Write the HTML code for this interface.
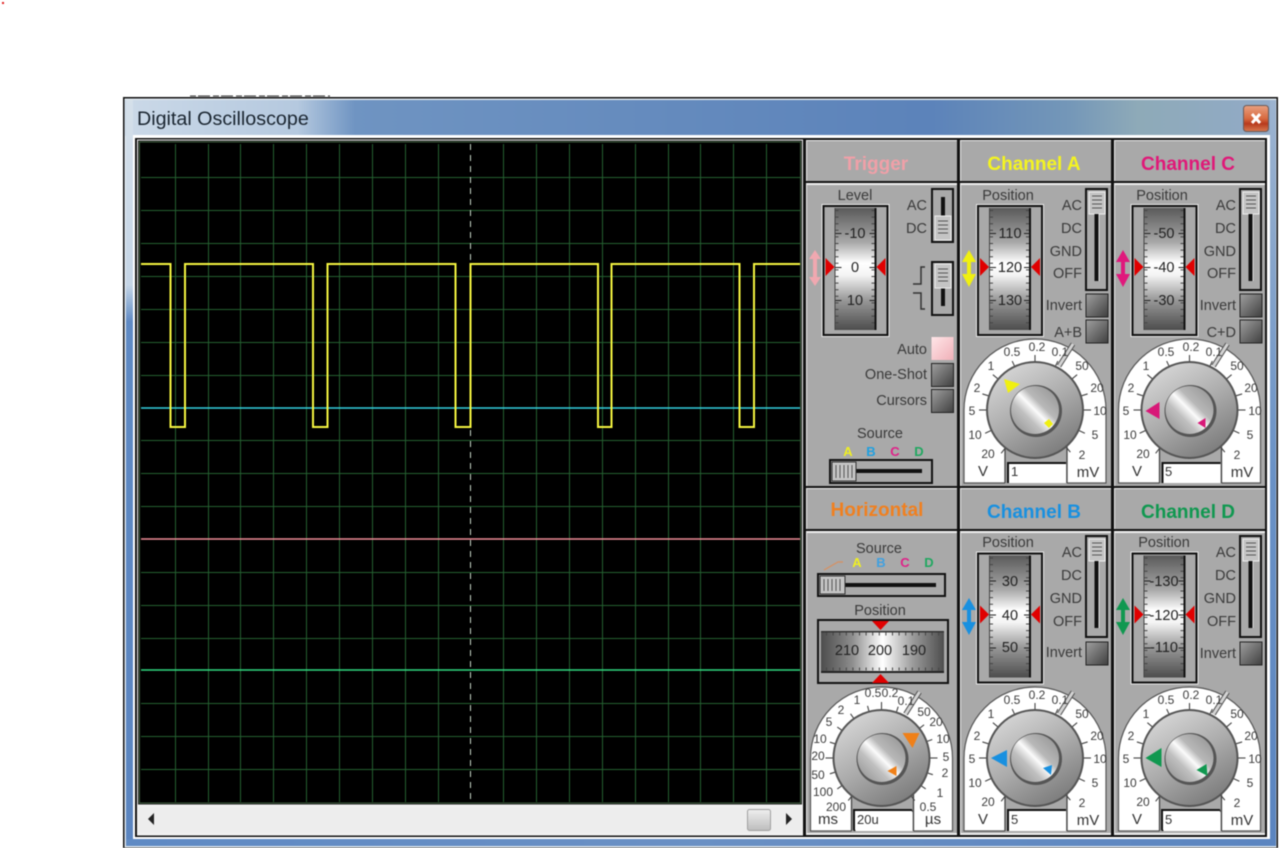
<!DOCTYPE html>
<html><head><meta charset="utf-8"><title>Digital Oscilloscope</title>
<style>
html,body{margin:0;padding:0;background:#fff;width:1280px;height:848px;overflow:hidden}
svg{display:block;position:absolute;left:0;top:0;filter:blur(.4px)}
text{font-family:"Liberation Sans",sans-serif;fill:#3a3a3a}
.h{font-size:19px;font-weight:bold;text-anchor:middle}
.r{font-size:14.5px;text-anchor:end}
.m{font-size:14.5px;text-anchor:middle}
.s{font-size:14.5px;text-anchor:middle;fill:#222}
.d{font-size:12px;text-anchor:middle;fill:#3c3c3c}
.u{font-size:15px;text-anchor:middle;fill:#333}
.v{font-size:13px;fill:#333}
.l{font-size:13px;font-weight:bold;text-anchor:middle}
</style></head><body>
<svg width="1280" height="848" viewBox="0 0 1280 848" xmlns="http://www.w3.org/2000/svg">
<defs>
<linearGradient id="tb" x1="0" x2="1" y1="0" y2="0">
<stop offset="0" stop-color="#cbd9e8"/><stop offset=".15" stop-color="#b5c9df"/><stop offset=".2" stop-color="#6f94c2"/><stop offset=".7" stop-color="#5c83ba"/><stop offset=".82" stop-color="#7497b8"/><stop offset=".88" stop-color="#8eaab8"/><stop offset="1" stop-color="#92aac8"/>
</linearGradient>
<linearGradient id="lf" x1="0" x2="0" y1="0" y2="1">
<stop offset="0" stop-color="#d5e0ea"/><stop offset=".25" stop-color="#c5d5e6"/><stop offset=".3" stop-color="#5f8ac4"/><stop offset="1" stop-color="#5b85c0"/>
</linearGradient>
<linearGradient id="rf" x1="0" x2="0" y1="0" y2="1">
<stop offset="0" stop-color="#9db4d0"/><stop offset=".5" stop-color="#6a92c6"/><stop offset="1" stop-color="#5b85c0"/>
</linearGradient>
<linearGradient id="bt" x1="0" x2="1" y1="0" y2="0">
<stop offset="0" stop-color="#5f8ac4"/><stop offset=".5" stop-color="#6a90c4"/><stop offset="1" stop-color="#5b85c0"/>
</linearGradient>
<linearGradient id="vs" x1="0" x2="0" y1="0" y2="1">
<stop offset="0" stop-color="#5a5a5a"/><stop offset=".28" stop-color="#a8a8a8"/><stop offset=".45" stop-color="#fff"/><stop offset=".55" stop-color="#f4f4f4"/><stop offset=".75" stop-color="#9a9a9a"/><stop offset="1" stop-color="#4d4d4d"/>
</linearGradient>
<linearGradient id="hs" x1="0" x2="1" y1="0" y2="0">
<stop offset="0" stop-color="#4d4d4d"/><stop offset=".25" stop-color="#8c8c8c"/><stop offset=".5" stop-color="#fff"/><stop offset=".75" stop-color="#9a9a9a"/><stop offset="1" stop-color="#4d4d4d"/>
</linearGradient>
<linearGradient id="bn" x1="0" x2="1" y1="0" y2="1">
<stop offset="0" stop-color="#a0a0a0"/><stop offset="1" stop-color="#3f3f3f"/>
</linearGradient>
<linearGradient id="au" x1="0" x2="1" y1="0" y2="1">
<stop offset="0" stop-color="#ffe6e8"/><stop offset="1" stop-color="#f0b0b8"/>
</linearGradient>
<linearGradient id="kb" x1=".2" x2=".8" y1="0" y2="1">
<stop offset="0" stop-color="#d8d8d8"/><stop offset=".5" stop-color="#ababab"/><stop offset="1" stop-color="#777"/>
</linearGradient>
<linearGradient id="cp" x1="0" x2="1" y1="1" y2="0">
<stop offset="0" stop-color="#8a8a8a"/><stop offset=".35" stop-color="#c0c0c0"/><stop offset=".5" stop-color="#fbfbfb"/><stop offset=".62" stop-color="#b8b8b8"/><stop offset="1" stop-color="#8e8e8e"/>
</linearGradient>
<linearGradient id="cl" x1="0" x2="0" y1="0" y2="1">
<stop offset="0" stop-color="#e8a080"/><stop offset=".5" stop-color="#d86a40"/><stop offset=".7" stop-color="#b83a1c"/><stop offset="1" stop-color="#d87a50"/>
</linearGradient>
<linearGradient id="sc" x1="0" x2="0" y1="0" y2="1">
<stop offset="0" stop-color="#efefef"/><stop offset="1" stop-color="#bdbdbd"/>
</linearGradient>

<g id="vbox">
<rect x="-33.500" y="-63.500" width="67" height="132" fill="none" stroke="#e8e8e8"/>
<rect x="-32" y="-62" width="64" height="129" fill="#a9a9a9" stroke="#111" stroke-width="2"/>
<rect x="-20" y="-60" width="40" height="122" fill="url(#vs)"/>
<rect x="19" y="-60" width="2" height="122" fill="#111"/>
<rect x="-21" y="-60" width="1" height="122" fill="#444"/>
<line x1="-18.500" x2="-18.500" y1="-58" y2="60" stroke="#444" stroke-width="3" stroke-dasharray="1 5.600"/>
<line x1="17.500" x2="17.500" y1="-58" y2="60" stroke="#444" stroke-width="3" stroke-dasharray="1 5.600"/>
<path d="M-20 -34.500h6M14 -34.500h6M-20 -.5h6M14 -.5h6M-20 32.500h6M14 32.500h6" stroke="#222" fill="none"/>
<path d="M-30 -10L-21 -1L-30 8ZM30 -10L21 -1L30 8Z" fill="#e00000"/>
</g>

<g id="vslide">
<rect x="-10" y="0" width="21" height="101" fill="#a9a9a9" stroke="#111" stroke-width="2"/>
<rect x="-7" y="3" width="16" height="22" fill="#c4c4c4" stroke="#eee"/>
<path d="M-4 7h10M-4 11h10M-4 15h10M-4 19h10" stroke="#555"/>
<rect x="-1.500" y="25" width="4" height="67" fill="#111"/>
<rect x="2.500" y="25" width="1" height="67" fill="#ddd"/>
</g>

<rect id="btn" width="22" height="23" fill="url(#bn)" stroke="#222"/>
<rect id="ab" width="22" height="23" fill="url(#au)"/>

<g id="dial">
<path d="M-71 73V0A71 71 0 0 1 71 0V73H-71Z" fill="#fff" stroke="#555" stroke-width="1.200"/>
<rect x="-30" y="35" width="62" height="39" fill="#a9a9a9"/>
<path d="M-30 35V73M32 35V73" stroke="#444" stroke-width="1.300"/>
<path d="M24 -44L38 -66" stroke="#555" stroke-width="5"/>
<path d="M24 -44L38 -66" stroke="#d4d4d4" stroke-width="3"/>
<rect x="-28" y="52" width="59" height="21" fill="#fff"/>
<path d="M-27 73V53H31" fill="none" stroke="#111" stroke-width="2"/>
</g>

<g id="ticks">
<g stroke="#444" stroke-width="1.100">
<line x1="46" x2="55" transform="rotate(-90)"/><line x1="46" x2="54" transform="rotate(-115)"/><line x1="46" x2="55" transform="rotate(-140)"/><line x1="46" x2="55" transform="rotate(-163)"/><line x1="46" x2="56" transform="rotate(180)"/><line x1="46" x2="55" transform="rotate(155)"/><line x1="46" x2="55" transform="rotate(128)"/><line x1="46" x2="54" transform="rotate(-65)"/><line x1="46" x2="55" transform="rotate(-40)"/><line x1="46" x2="55" transform="rotate(-17)"/><line x1="46" x2="56"/><line x1="46" x2="55" transform="rotate(25)"/><line x1="46" x2="55" transform="rotate(50)"/>
</g>
</g>

<g id="knob">
<circle r="49" fill="#555"/>
<circle r="47" fill="url(#kb)"/>
<circle r="26" cx="1" cy="1" fill="#555"/>
<circle r="24" fill="url(#cp)"/>
</g>
</defs>

<!-- page artifacts -->
<rect x="2" y="2" width="2" height="2" fill="#e02020"/>
<path d="M190 96h140" stroke="#333" stroke-width="1" stroke-dasharray="6 2 12 3"/>

<!-- window -->
<rect x="123" y="97" width="1155" height="751" fill="#111"/>
<rect x="124.500" y="98.500" width="1152" height="749" fill="#dfe7ee"/>
<rect x="125" y="100" width="1151" height="36" fill="url(#tb)"/>
<rect x="126" y="100" width="7" height="740" fill="url(#lf)"/>
<rect x="1270" y="100" width="6" height="740" fill="url(#rf)"/>
<rect x="126" y="839" width="1150" height="7" fill="url(#bt)"/>
<text x="137" y="125" style="font-size:19.700px;fill:#1a2530">Digital Oscilloscope</text>
<rect x="1243.500" y="105.500" width="25" height="26" rx="3" fill="url(#cl)" stroke="#6a5a58"/>
<path d="M1252 114L1260 123M1260 114L1252 123" stroke="#fff" stroke-width="3"/>

<!-- inner frame -->
<rect x="133" y="135" width="1137" height="704" fill="#fff"/>
<rect x="135" y="138" width="1132" height="699" fill="#111"/>
<rect x="137" y="139.500" width="666" height="696" fill="#f0f0f0"/>
<rect x="138" y="140.500" width="664" height="664" fill="#222"/>
<rect x="139.500" y="142" width="661" height="661" fill="#000" stroke="#3a5a3a"/>

<!-- grid -->
<path d="M175.500 144V802M208.500 144V802M240.500 144V802M273.500 144V802M306.500 144V802M339.500 144V802M372.500 144V802M405.500 144V802M438.500 144V802M503.500 144V802M536.500 144V802M569.500 144V802M602.500 144V802M635.500 144V802M668.500 144V802M700.500 144V802M733.500 144V802M766.500 144V802M141 177.500H800M141 210.500H800M141 243.500H800M141 276.500H800M141 309.500H800M141 342.500H800M141 375.500H800M141 440.500H800M141 473.500H800M141 506.500H800M141 572.500H800M141 605.500H800M141 638.500H800M141 703.500H800M141 736.500H800M141 769.500H800" stroke="#246030" stroke-width="1" fill="none"/>
<line x1="470.500" x2="470.500" y1="144" y2="802" stroke="#c8d8c8" stroke-dasharray="6 5"/>
<line x1="141" x2="800" y1="408" y2="408" stroke="#34d0e0" stroke-width="1.500"/>
<line x1="141" x2="800" y1="539" y2="539" stroke="#f08c98" stroke-width="1.500"/>
<line x1="141" x2="800" y1="670" y2="670" stroke="#30d880" stroke-width="1.500"/>
<path d="M141 264H170.500V427H185V264H313V427H327.500V264H455.500V427H470.500V264H598V427H611.500V264H739.500V427H754V264H800" fill="none" stroke="#f6f640" stroke-width="2"/>

<!-- scrollbar -->
<rect x="138" y="807" width="665" height="26" fill="#ededed"/>
<path d="M154 813L148 819L154 825Z" fill="#222"/>
<path d="M786 813L792 819L786 825Z" fill="#222"/>
<rect x="747.500" y="809.500" width="23" height="21" rx="2" fill="url(#sc)" stroke="#a0a0a0"/>

<!-- right panels -->
<rect x="804" y="139" width="463" height="698" fill="#111"/>
<g fill="#eee">
<rect x="806" y="140" width="151" height="349"/><rect x="960" y="140" width="151" height="349"/><rect x="1114" y="140" width="151" height="349"/>
<rect x="806" y="488" width="151" height="347"/><rect x="960" y="488" width="151" height="347"/><rect x="1114" y="488" width="151" height="347"/>
</g>
<g fill="#a9a9a9">
<rect x="807" y="141" width="150" height="40"/><rect x="961" y="141" width="150" height="40"/><rect x="1115" y="141" width="150" height="40"/>
<rect x="807" y="185" width="150" height="301"/><rect x="961" y="185" width="150" height="301"/><rect x="1115" y="185" width="150" height="301"/>
<rect x="807" y="489" width="150" height="40"/><rect x="961" y="489" width="150" height="40"/><rect x="1115" y="489" width="150" height="40"/>
<rect x="807" y="533" width="150" height="300"/><rect x="961" y="533" width="150" height="300"/><rect x="1115" y="533" width="150" height="300"/>
</g>
<g fill="#111">
<rect x="806" y="181" width="459" height="2"/>
<rect x="806" y="529" width="459" height="2"/>
<rect x="806" y="486" width="459" height="2"/>
</g>

<text class="h" x="876" y="170" style="fill:#f0a0a8">Trigger</text>
<text class="h" x="1034" y="170" style="fill:#f4f420">Channel A</text>
<text class="h" x="1188" y="170" style="fill:#e01878">Channel C</text>
<text class="h" x="877" y="516" style="fill:#f08020">Horizontal</text>
<text class="h" x="1034" y="518" style="fill:#1890e0">Channel B</text>
<text class="h" x="1188" y="518" style="fill:#109850">Channel D</text>

<!-- Trigger -->
<text class="m" x="855" y="200">Level</text>
<use href="#vbox" x="855.500" y="268"/>
<text class="s" x="855" y="238">-10</text><text class="s" x="855" y="272">0</text><text class="s" x="855" y="305">10</text>
<path d="M815 250L809 259H813V277H809L815 286L821 277H817V259H821Z" fill="#f0a8b0"/>
<text class="r" x="927" y="210">AC</text><text class="r" x="927" y="233">DC</text>
<rect x="932" y="189" width="21" height="53" fill="#a9a9a9" stroke="#111" stroke-width="2"/>
<rect x="941" y="197" width="4" height="20" fill="#111"/>
<rect x="935" y="216" width="16" height="24" fill="#c4c4c4" stroke="#eee"/>
<path d="M938 221h10M938 225h10M938 229h10M938 233h10" stroke="#555"/>
<rect x="932" y="262" width="21" height="53" fill="#a9a9a9" stroke="#111" stroke-width="2"/>
<rect x="941" y="288" width="4" height="18" fill="#111"/>
<rect x="935" y="264" width="16" height="24" fill="#c4c4c4" stroke="#eee"/>
<path d="M938 269h10M938 273h10M938 277h10M938 281h10" stroke="#555"/>
<path d="M925 267H921V284H913M913 293H921V309H925" fill="none" stroke="#333" stroke-width="1.500"/>
<use href="#ab" x="931.500" y="337"/><use href="#btn" x="931.500" y="363.500"/><use href="#btn" x="931.500" y="389.500"/>
<text class="r" x="927" y="354">Auto</text><text class="r" x="927" y="379">One-Shot</text><text class="r" x="927" y="405">Cursors</text>
<text class="m" x="880" y="438">Source</text>
<text class="l" x="848" y="456" style="fill:#f0f020">A</text><text class="l" x="871" y="456" style="fill:#20a0e0">B</text><text class="l" x="895" y="456" style="fill:#e02088">C</text><text class="l" x="919" y="456" style="fill:#20a860">D</text>
<rect x="830" y="460" width="102" height="23" fill="#a9a9a9" stroke="#111" stroke-width="2"/>
<rect x="856" y="469" width="66" height="4" fill="#111"/>
<rect x="832" y="462" width="24" height="19" fill="#c4c4c4" stroke="#333"/>
<path d="M836 465v13M840 465v13M844 465v13M848 465v13M852 465v13" stroke="#555"/>

<!-- Channel A -->
<text class="m" x="1008" y="200">Position</text>
<use href="#vbox" x="1010" y="268"/>
<text class="s" x="1010" y="238">110</text><text class="s" x="1010" y="272">120</text><text class="s" x="1010" y="305">130</text>
<path d="M969 250L962 262H967V274H962L969 287L976 274H971V262H976Z" fill="#f0f010"/>
<text class="r" x="1082" y="210">AC</text><text class="r" x="1082" y="233">DC</text><text class="r" x="1082" y="256">GND</text><text class="r" x="1082" y="278">OFF</text>
<use href="#vslide" x="1096" y="189"/>
<use href="#btn" x="1086" y="294"/><use href="#btn" x="1086" y="320"/>
<text class="r" x="1082" y="310">Invert</text><text class="r" x="1082" y="337">A+B</text>
<g transform="translate(1035,410)"><use href="#dial"/><use href="#ticks"/><use href="#knob"/>
<path d="M-31 -31L-15 -26L-27 -17Z" fill="#f0f010"/><path d="M9 13L14 9L18 14L14 18Z" fill="#f0f010"/></g>
<text class="d" x="1012" y="356">0.5</text><text class="d" x="1037" y="351">0.2</text><text class="d" x="1060" y="356">0.1</text><text class="d" x="1082" y="370">50</text><text class="d" x="1097" y="392">20</text><text class="d" x="1100" y="415">10</text><text class="d" x="1095" y="439">5</text><text class="d" x="1082" y="459">2</text><text class="d" x="988" y="458">20</text><text class="d" x="975" y="439">10</text><text class="d" x="972" y="415">5</text><text class="d" x="977" y="392">2</text><text class="d" x="991" y="370">1</text>
<text class="u" x="983" y="476">V</text><text class="u" x="1088" y="477">mV</text><text class="v" x="1011" y="476">1</text>

<!-- Channel C -->
<text class="m" x="1162" y="200">Position</text>
<use href="#vbox" x="1164.500" y="268"/>
<text class="s" x="1164" y="238">-50</text><text class="s" x="1164" y="272">-40</text><text class="s" x="1164" y="305">-30</text>
<path d="M1123 250L1116 262H1121V274H1116L1123 287L1130 274H1125V262H1130Z" fill="#e0187c"/>
<text class="r" x="1236" y="210">AC</text><text class="r" x="1236" y="233">DC</text><text class="r" x="1236" y="256">GND</text><text class="r" x="1236" y="278">OFF</text>
<use href="#vslide" x="1250" y="189"/>
<use href="#btn" x="1240" y="294"/><use href="#btn" x="1240" y="320"/>
<text class="r" x="1236" y="310">Invert</text><text class="r" x="1236" y="337">C+D</text>
<g transform="translate(1189.500,410)"><use href="#dial"/><use href="#ticks"/><use href="#knob"/>
<path d="M-30 -8V9L-44 1Z" fill="#d81878"/><path d="M8 13L16 8V18Z" fill="#d81878"/></g>
<text class="d" x="1166" y="356">0.5</text><text class="d" x="1191" y="351">0.2</text><text class="d" x="1214" y="356">0.1</text><text class="d" x="1237" y="370">50</text><text class="d" x="1251" y="392">20</text><text class="d" x="1255" y="415">10</text><text class="d" x="1250" y="439">5</text><text class="d" x="1237" y="459">2</text><text class="d" x="1143" y="458">20</text><text class="d" x="1130" y="439">10</text><text class="d" x="1126" y="415">5</text><text class="d" x="1131" y="392">2</text><text class="d" x="1146" y="370">1</text>
<text class="u" x="1137" y="476">V</text><text class="u" x="1242" y="477">mV</text><text class="v" x="1165" y="476">5</text>

<!-- Channel B -->
<text class="m" x="1008" y="547">Position</text>
<use href="#vbox" x="1010" y="615.500"/>
<text class="s" x="1010" y="586">30</text><text class="s" x="1010" y="620">40</text><text class="s" x="1010" y="652">50</text>
<path d="M969 598L962 610H967V622H962L969 635L976 622H971V610H976Z" fill="#1890e0"/>
<text class="r" x="1082" y="557">AC</text><text class="r" x="1082" y="580">DC</text><text class="r" x="1082" y="603">GND</text><text class="r" x="1082" y="626">OFF</text>
<use href="#vslide" x="1096" y="536"/>
<use href="#btn" x="1086" y="642"/>
<text class="r" x="1082" y="657">Invert</text>
<g transform="translate(1035,758)"><use href="#dial"/><use href="#ticks"/><use href="#knob"/>
<path d="M-28 -8V9L-44 0Z" fill="#1890e0"/><path d="M8 10L17 7L16 17Z" fill="#1890e0"/></g>
<text class="d" x="1012" y="704">0.5</text><text class="d" x="1037" y="699">0.2</text><text class="d" x="1060" y="704">0.1</text><text class="d" x="1082" y="718">50</text><text class="d" x="1097" y="740">20</text><text class="d" x="1100" y="763">10</text><text class="d" x="1095" y="787">5</text><text class="d" x="1082" y="807">2</text><text class="d" x="988" y="806">20</text><text class="d" x="975" y="787">10</text><text class="d" x="972" y="763">5</text><text class="d" x="977" y="740">2</text><text class="d" x="991" y="718">1</text>
<text class="u" x="983" y="824">V</text><text class="u" x="1088" y="825">mV</text>
<rect x="1008" y="810" width="58" height="20" fill="#fff"/><path d="M1008 830V810H1066" fill="none" stroke="#111" stroke-width="2"/>
<text class="v" x="1011" y="824">5</text>

<!-- Channel D -->
<text class="m" x="1164" y="547">Position</text>
<use href="#vbox" x="1164.500" y="615.500"/>
<text class="s" x="1164" y="586">-130</text><text class="s" x="1164" y="620">-120</text><text class="s" x="1164" y="652">-110</text>
<path d="M1123 598L1116 610H1121V622H1116L1123 635L1130 622H1125V610H1130Z" fill="#109850"/>
<text class="r" x="1236" y="557">AC</text><text class="r" x="1236" y="580">DC</text><text class="r" x="1236" y="603">GND</text><text class="r" x="1236" y="626">OFF</text>
<use href="#vslide" x="1250" y="536"/>
<use href="#btn" x="1240" y="642"/>
<text class="r" x="1236" y="658">Invert</text>
<g transform="translate(1189.500,758)"><use href="#dial"/><use href="#ticks"/><use href="#knob"/>
<path d="M-28 -10V9L-44 0Z" fill="#109850"/><path d="M7 12L17 6L18 18Z" fill="#109850"/></g>
<text class="d" x="1166" y="704">0.5</text><text class="d" x="1191" y="699">0.2</text><text class="d" x="1214" y="704">0.1</text><text class="d" x="1237" y="718">50</text><text class="d" x="1251" y="740">20</text><text class="d" x="1255" y="763">10</text><text class="d" x="1250" y="787">5</text><text class="d" x="1237" y="807">2</text><text class="d" x="1143" y="806">20</text><text class="d" x="1130" y="787">10</text><text class="d" x="1126" y="763">5</text><text class="d" x="1131" y="740">2</text><text class="d" x="1146" y="718">1</text>
<text class="u" x="1137" y="824">V</text><text class="u" x="1242" y="825">mV</text>
<rect x="1162" y="810" width="58" height="20" fill="#fff"/><path d="M1162 830V810H1220" fill="none" stroke="#111" stroke-width="2"/>
<text class="v" x="1165" y="824">5</text>

<!-- Horizontal -->
<text class="m" x="879" y="553">Source</text>
<path d="M824 570L838 562H843" fill="none" stroke="#d89060" stroke-width="1.200"/>
<text class="l" x="857" y="567" style="fill:#f0f020">A</text><text class="l" x="881" y="567" style="fill:#40a0e0">B</text><text class="l" x="905" y="567" style="fill:#e02088">C</text><text class="l" x="929" y="567" style="fill:#20a860">D</text>
<rect x="818" y="574" width="127" height="22" fill="#a9a9a9" stroke="#111" stroke-width="2"/>
<rect x="845" y="583" width="91" height="4" fill="#111"/>
<rect x="820" y="576" width="25" height="18" fill="#c4c4c4" stroke="#333"/>
<path d="M824 579v12M828 579v12M832 579v12M836 579v12M840 579v12" stroke="#555"/>
<text class="m" x="880" y="615">Position</text>
<rect x="818" y="620" width="130" height="63" fill="#a9a9a9" stroke="#111" stroke-width="2"/>
<rect x="821" y="632" width="123" height="40" fill="url(#hs)"/>
<rect x="821" y="631" width="123" height="1.500" fill="#333"/><rect x="821" y="671" width="123" height="2" fill="#222"/>
<line x1="826" x2="940" y1="634" y2="634" stroke="#444" stroke-width="3" stroke-dasharray="1 5.600"/>
<line x1="826" x2="940" y1="669" y2="669" stroke="#444" stroke-width="3" stroke-dasharray="1 5.600"/>
<path d="M872 621H889L880.500 630ZM872 683H889L880.500 674Z" fill="#e00000"/>
<text class="s" x="847" y="655">210</text><text class="s" x="880" y="655">200</text><text class="s" x="914" y="655">190</text>
<g transform="translate(881.500,758)"><use href="#dial"/>
<g stroke="#444" stroke-width="1.100"><line x1="46" x2="54" transform="rotate(128)"/><line x1="46" x2="54" transform="rotate(145)"/><line x1="46" x2="54" transform="rotate(163)"/><line x1="46" x2="56" transform="rotate(180)"/><line x1="46" x2="54" transform="rotate(-163)"/><line x1="46" x2="54" transform="rotate(-145)"/><line x1="46" x2="54" transform="rotate(-125)"/><line x1="46" x2="54" transform="rotate(-105)"/><line x1="46" x2="56" transform="rotate(-90)"/><line x1="46" x2="54" transform="rotate(-72)"/><line x1="46" x2="54" transform="rotate(-38)"/><line x1="46" x2="54" transform="rotate(-20)"/><line x1="46" x2="56"/><line x1="46" x2="54" transform="rotate(18)"/><line x1="46" x2="54" transform="rotate(35)"/><line x1="46" x2="54" transform="rotate(52)"/></g>
<use href="#knob"/>
<path d="M21 -25H38L31 -10Z" fill="#f08018"/><path d="M6 13L15 8L15 18Z" fill="#f08018"/></g>
<text class="d" x="873" y="697">0.5</text><text class="d" x="890" y="697">0.2</text><text class="d" x="906" y="705">0.1</text><text class="d" x="924" y="716">50</text><text class="d" x="936" y="726">20</text><text class="d" x="943" y="743">10</text><text class="d" x="946" y="761">5</text><text class="d" x="945" y="777">2</text><text class="d" x="940" y="797">1</text><text class="d" x="928" y="811">0.5</text>
<text class="d" x="836" y="811">200</text><text class="d" x="823" y="796">100</text><text class="d" x="818" y="779">50</text><text class="d" x="818" y="760">20</text><text class="d" x="820" y="743">10</text><text class="d" x="829" y="726">5</text><text class="d" x="841" y="714">2</text><text class="d" x="857" y="704">1</text>
<text class="u" x="828" y="824">ms</text><text class="u" x="933" y="824">µs</text>
<rect x="854" y="810" width="58" height="20" fill="#fff"/><path d="M854 830V810H912" fill="none" stroke="#111" stroke-width="2"/>
<text class="v" x="857" y="824">20u</text>
</svg>
</body></html>
